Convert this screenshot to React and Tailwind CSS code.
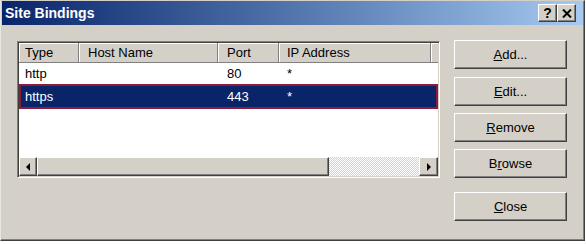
import React from "react";

const raised =
  "border border-t-white border-l-white border-r-[#404040] border-b-[#404040] shadow-[inset_-1px_-1px_0_#808080]";

function Btn({ pre, u, post, className = "" }) {
  return (
    <div
      className={`h-[29px] w-[113px] bg-[#d4d0c8] flex items-center justify-center text-[13px] text-black ${raised} ${className}`}
    >
      <span>
        {pre}
        <span className="underline underline-offset-[1px]">{u}</span>
        {post}
      </span>
    </div>
  );
}

const cols = [
  { w: "w-[60px]", pl: "pl-[6px]" },
  { w: "w-[139px]", pl: "pl-[9px]" },
  { w: "w-[61px]", pl: "pl-[9px]" },
  { w: "w-[152px]", pl: "pl-[8px]" },
];

function Row({ cells, selected }) {
  if (selected) {
    return (
      <div className="h-[25px] flex items-center bg-[#0a246a] border-2 border-[#8b1a3c] text-white">
        {cells.map((c, i) => (
          <div
            key={i}
            className={`${cols[i].w} ${cols[i].pl} shrink-0 ${i === 0 ? "-ml-[2px] pl-[6px]" : ""}`}
          >
            {c}
          </div>
        ))}
      </div>
    );
  }
  return (
    <div className="h-[21px] flex items-center text-black">
      {cells.map((c, i) => (
        <div key={i} className={`${cols[i].w} ${cols[i].pl} shrink-0`}>
          {c}
        </div>
      ))}
    </div>
  );
}

export default function App() {
  const headers = ["Type", "Host Name", "Port", "IP Address"];
  return (
    <div className="w-[586px] h-[244px] bg-white font-['Liberation_Sans',Arial,sans-serif]">
      <div className="w-[585px] h-[241px] bg-[#d4d0c8] border-t border-l border-t-[#d4d0c8] border-l-[#e8e6e0] border-r border-b border-r-[#404040] border-b-[#404040] shadow-[inset_-1px_-1px_0_#808080] flex flex-col">
        {/* Title bar */}
        <div className="h-[24px] mx-[1px] bg-gradient-to-r from-[#0a246a] to-[#a6caf0] flex items-center justify-between pl-[3px] pr-[7px]">
          <span className="text-white font-bold text-[14px] leading-none">Site Bindings</span>
          <div className="flex">
            <div className={`w-[19px] h-[18px] bg-[#d4d0c8] flex items-center justify-center ${raised}`}>
              <span className="font-bold text-[14px] leading-none text-black">?</span>
            </div>
            <div className={`w-[19px] h-[18px] bg-[#d4d0c8] flex items-center justify-center ${raised}`}>
              <svg width="10" height="9" viewBox="0 0 10 9">
                <path d="M1 0.5 L9 8.5 M9 0.5 L1 8.5" stroke="#000" strokeWidth="2" />
              </svg>
            </div>
          </div>
        </div>

        {/* Content */}
        <div className="flex pl-[16px] pt-[15px] gap-[14px]">
          {/* List view */}
          <div className="mt-[1px] w-[423px] h-[137px] bg-white border border-t-[#808080] border-l-[#808080] border-r-white border-b-white shadow-[inset_1px_1px_0_#404040,inset_-1px_-1px_0_#d4d0c8] p-[1px] flex flex-col text-[13px]">
            {/* header */}
            <div className="h-[20px] flex shrink-0 bg-[#d4d0c8]">
              {headers.map((h, i) => (
                <div
                  key={h}
                  className={`${cols[i].w} ${cols[i].pl} shrink-0 flex items-center border-r border-b border-[#808080] shadow-[inset_1px_1px_0_#ffffff] text-black`}
                >
                  {h}
                </div>
              ))}
              <div className="flex-1 border-b border-[#808080] shadow-[inset_1px_1px_0_#ffffff]" />
            </div>
            <Row cells={["http", "", "80", "*"]} />
            <Row cells={["https", "", "443", "*"]} selected />
            <div className="flex-1" />
            {/* horizontal scrollbar */}
            <div className="h-[19px] flex shrink-0 bg-[#d4d0c8]">
              <div className={`w-[18px] h-full flex items-center justify-center ${raised}`}>
                <svg width="5" height="8" viewBox="0 0 5 8">
                  <path d="M4 0 L0 4 L4 8 Z" fill="#000" />
                </svg>
              </div>
              <div className={`w-[292px] h-full bg-[#d4d0c8] ${raised}`} />
              <div className="flex-1 h-full bg-[repeating-conic-gradient(#d4d0c8_0%_25%,#ffffff_0%_50%)] bg-size-[2px_2px]" />
              <div className={`w-[19px] h-full flex items-center justify-center ${raised}`}>
                <svg width="5" height="8" viewBox="0 0 5 8">
                  <path d="M1 0 L5 4 L1 8 Z" fill="#000" />
                </svg>
              </div>
            </div>
          </div>

          {/* Buttons */}
          <div className="flex flex-col">
            <Btn pre="" u="A" post="dd..." />
            <Btn pre="" u="E" post="dit..." className="mt-[8px]" />
            <Btn pre="" u="R" post="emove" className="mt-[7px]" />
            <Btn pre="B" u="r" post="owse" className="mt-[7px]" />
            <Btn pre="" u="C" post="lose" className="mt-[14px]" />
          </div>
        </div>
      </div>
    </div>
  );
}
